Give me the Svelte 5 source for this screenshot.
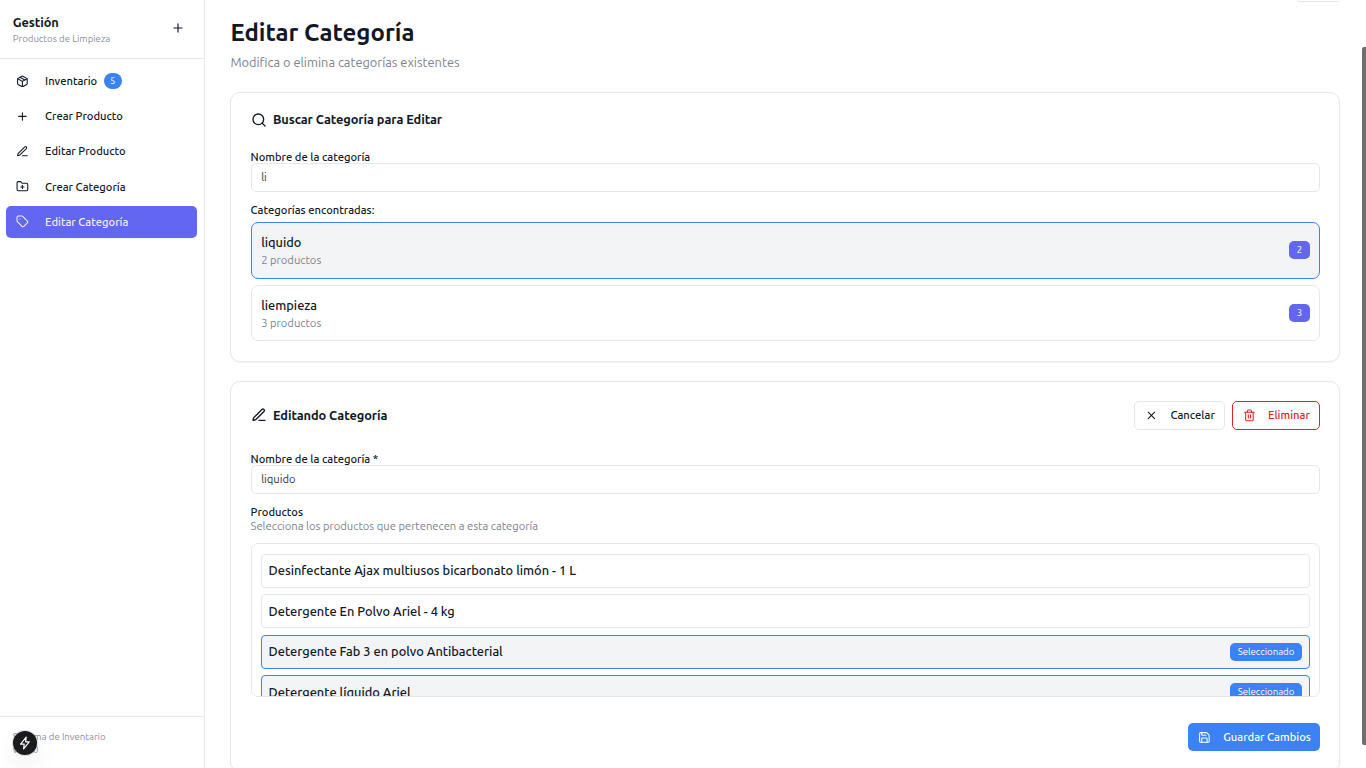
<script>
  const nav = [
    { icon: 'box', label: 'Inventario', count: 5 },
    { icon: 'plus', label: 'Crear Producto' },
    { icon: 'pen', label: 'Editar Producto' },
    { icon: 'folder', label: 'Crear Categoría' },
    { icon: 'tag', label: 'Editar Categoría', active: true }
  ];
  const categories = [
    { name: 'liquido', count: 2, selected: true },
    { name: 'liempieza', count: 3 }
  ];
  const products = [
    { name: 'Desinfectante Ajax multiusos bicarbonato limón - 1 L' },
    { name: 'Detergente En Polvo Ariel - 4 kg' },
    { name: 'Detergente Fab 3 en polvo Antibacterial', selected: true },
    { name: 'Detergente líquido Ariel', selected: true }
  ];
  const icons = {
    box: ['M11 21.73a2 2 0 0 0 2 0l7-4A2 2 0 0 0 21 16V8a2 2 0 0 0-1-1.73l-7-4a2 2 0 0 0-2 0l-7 4A2 2 0 0 0 3 8v8a2 2 0 0 0 1 1.73z', 'M12 22V12', 'M3.29 7 12 12l8.71-5', 'm7.5 4.27 9 5.15'],
    plus: ['M5 12h14', 'M12 5v14'],
    pen: ['M12 20h9', 'M16.376 3.622a1 1 0 0 1 3.002 3.002L7.368 18.635a2 2 0 0 1-.855.506l-2.872.838a.5.5 0 0 1-.62-.62l.838-2.872a2 2 0 0 1 .506-.854z'],
    folder: ['M12 10v6', 'M9 13h6', 'M20 20a2 2 0 0 0 2-2V8a2 2 0 0 0-2-2h-7.9a2 2 0 0 1-1.69-.9L9.6 3.9A2 2 0 0 0 7.93 3H4a2 2 0 0 0-2 2v13a2 2 0 0 0 2 2Z'],
    tag: ['M12.586 2.586A2 2 0 0 0 11.172 2H4a2 2 0 0 0-2 2v7.172a2 2 0 0 0 .586 1.414l8.704 8.704a2.426 2.426 0 0 0 3.42 0l6.58-6.58a2.426 2.426 0 0 0 0-3.42z', 'M7.5 7.5h.01'],
    search: ['m21 21-4.34-4.34', 'M19 11a8 8 0 1 1-16 0a8 8 0 0 1 16 0z'],
    x: ['M18 6 6 18', 'm6 6 12 12'],
    trash: ['M3 6h18', 'M19 6v14a2 2 0 0 1-2 2H7a2 2 0 0 1-2-2V6', 'M8 6V4a2 2 0 0 1 2-2h4a2 2 0 0 1 2 2v2', 'M10 11v6', 'M14 11v6'],
    save: ['M15.2 3a2 2 0 0 1 1.4.6l3.8 3.8a2 2 0 0 1 .6 1.4V19a2 2 0 0 1-2 2H5a2 2 0 0 1-2-2V5a2 2 0 0 1 2-2z', 'M17 21v-7a1 1 0 0 0-1-1H8a1 1 0 0 0-1 1v7', 'M7 3v4a1 1 0 0 0 1 1h7']
  };
</script>

{#snippet icon(name, size)}
  <svg width={size} height={size} viewBox="0 0 24 24" fill="none" stroke="currentColor" stroke-width="2" stroke-linecap="round" stroke-linejoin="round">
    {#each icons[name] as d}<path {d} />{/each}
  </svg>
{/snippet}

<div class="app">
  <aside>
    <header>
      <div>
        <div class="brand">Gestión</div>
        <div class="tagline">Productos de Limpieza</div>
      </div>
      <button class="add" aria-label="Crear">{@render icon('plus', 14)}</button>
    </header>
    <nav>
      {#each nav as item}
        <button class="item" class:active={item.active}>
          {@render icon(item.icon, 12.8)}
          <span>{item.label}</span>
          {#if item.count}<b>{item.count}</b>{/if}
        </button>
      {/each}
    </nav>
    <footer>
      <div>Sistema de Inventario</div>
      <div>v1.0.0</div>
    </footer>
  </aside>

  <main>
    <div class="toggle"></div>
    <h1>Editar Categoría</h1>
    <p class="lead">Modifica o elimina categorías existentes</p>

    <section class="card find">
      <h2>{@render icon('search', 16)}<span>Buscar Categoría para Editar</span></h2>
      <label for="q">Nombre de la categoría</label>
      <input id="q" value="li" />
      <div class="found">Categorías encontradas:</div>
      <div class="cats">
        {#each categories as c}
          <div class="cat" class:selected={c.selected}>
            <div>
              <div class="name">{c.name}</div>
              <div class="sub">{c.count} productos</div>
            </div>
            <span class="count">{c.count}</span>
          </div>
        {/each}
      </div>
    </section>

    <section class="card edit">
      <div class="head">
        <h2>{@render icon('pen', 16)}<span>Editando Categoría</span></h2>
        <div class="actions">
          <button class="btn cancel">{@render icon('x', 12.8)}<span>Cancelar</span></button>
          <button class="btn danger">{@render icon('trash', 12.8)}<span>Eliminar</span></button>
        </div>
      </div>
      <label for="n">Nombre de la categoría *</label>
      <input id="n" value="liquido" />
      <div class="plabel">Productos</div>
      <div class="phint">Selecciona los productos que pertenecen a esta categoría</div>
      <div class="list">
        {#each products as p}
          <div class="prod" class:selected={p.selected}>
            <span class="pname">{p.name}</span>
            {#if p.selected}<span class="tagsel">Seleccionado</span>{/if}
          </div>
        {/each}
      </div>
      <div class="save">
        <button class="btn primary">{@render icon('save', 12.8)}<span>Guardar Cambios</span></button>
      </div>
    </section>
  </main>

  <div class="thumb"></div>
  <div class="dev">
    <svg width="14" height="14" viewBox="0 0 14 14" fill="none" stroke="#fff" stroke-width="1.2" stroke-linejoin="round"><path d="M8.2 1.2 2.6 8.2h3.600l-.6 4.600L11.200 5.800H7.600z" /></svg>
  </div>
</div>

<style>
  :global(body) { margin: 0; background: #fff; overflow: hidden; }
  .app {
    display: flex; position: relative; width: 1366px; height: 768px; overflow: hidden;
    font-family: Ubuntu, "Noto Sans", sans-serif; color: #111827; font-size: 11.2px;
  }
  .app * { box-sizing: border-box; }
  svg { flex: none; display: block; }
  button, input { font: inherit; color: inherit; background: none; border: 0; margin: 0; padding: 0; }
  h1, h2, p { margin: 0; }
  span, label, h1, p, .app div { white-space: nowrap; }

  aside { flex: none; width: 205px; border-right: 1px solid #e5e7eb; display: flex; flex-direction: column; }
  aside header { height: 59px; border-bottom: 1px solid #e5e7eb; display: flex; justify-content: space-between; padding: 14px 18.600px 0 12.8px; }
  .brand { font-size: 12.8px; line-height: 16px; font-weight: 600; letter-spacing: -0.08px; }
  .tagline { font-size: 9.6px; line-height: 18px; color: #8b909b; }
  .add { height: 14px; margin-top: 7.400px; }
  nav { flex: 1; padding: 6px 7px 0 6px; display: flex; flex-direction: column; gap: 3.2px; }
  .item { height: 32px; border-radius: 5px; padding: 0 10px; display: flex; align-items: center; text-align: left; font-weight: 500; }
  .item span { margin-left: 16.300px; }
  .item b { margin-left: 6.6px; width: 18px; height: 16px; border-radius: 8px; background: #3b82f6; color: #fff; font-size: 9.6px; font-weight: 400; line-height: 16px; text-align: center; }
  .active { background: #6366f1; color: #eef0fe; box-shadow: 0 1px 2px #0000000d; }
  footer { height: 52px; border-top: 1px solid #e5e7eb; padding: 13px 12.8px 0; font-size: 9.6px; line-height: 13px; color: #8b909b; }

  main { flex: 1; min-width: 0; padding: 0 26px 0 25.4px; }
  .toggle { margin: 0 1px 0 auto; width: 42px; height: 2px; border: 1px solid #e5e7eb; border-top: 0; border-radius: 0 0 5px 5px; }
  h1 { margin-top: 15px; height: 31px; line-height: 32px; font-size: 24px; font-weight: 600; }
  .lead { margin-top: 5px; height: 18px; line-height: 18px; font-size: 12.8px; color: #7d828f; }
  .card { border: 1px solid #e5e7eb; border-radius: 10px; box-shadow: 0 1px 2px #0000000d; padding: 0 19px 0 19.2px; }
  .find { margin-top: 21px; height: 270px; padding-top: 18px; }
  .edit { margin-top: 19px; height: 391px; padding-top: 19px; }
  h2 { display: flex; align-items: center; gap: 6.4px; height: 17px; font-size: 12.8px; font-weight: 600; letter-spacing: -0.08px; }
  .find h2 span { margin-top: -2px; }
  label { display: block; height: 13px; line-height: 15px; font-weight: 500; }
  .find label { margin-top: 22px; }
  input { display: block; width: 100%; height: 29px; border: 1px solid #e5e7eb; border-radius: 5px; padding: 0 9.6px 2px; color: #2b3240; outline: 0; }
  .found { margin-top: 10px; height: 16px; line-height: 16px; font-weight: 500; }
  .cats { margin-top: 4px; display: flex; flex-direction: column; gap: 6px; }
  .cat { height: 56px; border: 1px solid #e5e7eb; border-radius: 7px; padding: 0 9px 0 9.6px; display: flex; align-items: center; justify-content: space-between; }
  .cat.selected { height: 57px; padding-bottom: 1px; }
  .selected { background: #f3f4f6; border-color: #3b82f6 !important; }
  .name { font-size: 12.8px; line-height: 19px; font-weight: 500; }
  .sub { line-height: 16px; color: #7d828f; }
  .count { width: 21px; height: 18px; border-radius: 5px; background: #6366f1; color: #fff; font-size: 9.6px; line-height: 18px; text-align: center; }
  .head { display: flex; justify-content: space-between; height: 29px; }
  .head h2 { margin-top: 5px; }
  .actions { display: flex; gap: 7px; }
  .btn { height: 29px; border-radius: 5px; display: flex; align-items: center; justify-content: space-between; padding: 0 9.2px 0 9.600px; font-weight: 500; }
  .actions span { margin-top: -1px; }
  .cancel { width: 91px; border: 1px solid #e5e7eb; padding-left: 10px; }
  .danger { width: 88px; border: 1px solid #dc2626; color: #dc2626; }
  .edit label { margin-top: 22px; }
  .plabel { margin-top: 10px; height: 16px; line-height: 16px; font-weight: 500; }
  .phint { height: 13px; line-height: 13px; color: #7d828f; }
  .list { margin-top: 10px; height: 154px; border: 1px solid #e5e7eb; border-radius: 7px; overflow: hidden; padding: 9.85px 9px 0 9.6px; display: flex; flex-direction: column; gap: 6.4px; }
  .prod { flex: none; height: 34px; border: 1px solid #e5e7eb; border-radius: 4px; padding: 0 7px 0 6.4px; display: flex; align-items: center; justify-content: space-between; font-size: 12.8px; font-weight: 500; }
  .pname { line-height: 18px; margin-top: -1px; }
  .tagsel { width: 72px; height: 18px; border-radius: 5px; background: #3b82f6; color: #fff; font-size: 9.6px; font-weight: 400; line-height: 18.700px; text-align: center; }
  .save { display: flex; justify-content: flex-end; margin-top: 26px; }
  .primary { width: 132px; height: 28px; background: #3b82f6; color: #fff; }

  .thumb { position: absolute; left: 1362px; top: 47px; width: 4px; height: 698px; background: #6f6f6f; border-radius: 2px 0 0 2px; }
  .dev { position: absolute; left: 13px; top: 731px; width: 24px; height: 24px; padding-right: 1px; border-radius: 50%; background: #1b1b1d; display: flex; align-items: center; justify-content: center; box-shadow: 0 0 0 1px #00000020, 0 10px 26px #00000014; }
</style>
